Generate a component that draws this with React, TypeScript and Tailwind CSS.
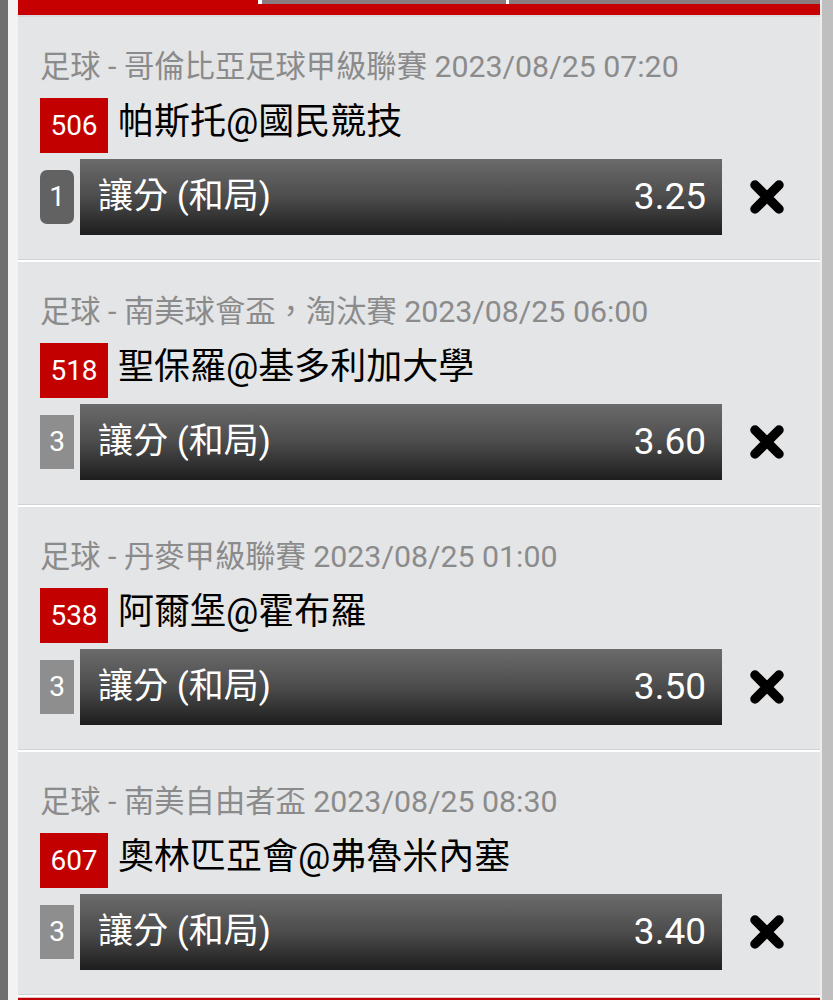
import React from "react";

type Bet = {
  meta: string;
  code: string;
  teams: string;
  num: string;
  first?: boolean;
  odds: string;
};

const bets: Bet[] = [
  { meta: "足球 - 哥倫比亞足球甲級聯賽 2023/08/25 07:20", code: "506", teams: "帕斯托@國民競技", num: "1", first: true, odds: "3.25" },
  { meta: "足球 - 南美球會盃，淘汰賽 2023/08/25 06:00", code: "518", teams: "聖保羅@基多利加大學", num: "3", odds: "3.60" },
  { meta: "足球 - 丹麥甲級聯賽 2023/08/25 01:00", code: "538", teams: "阿爾堡@霍布羅", num: "3", odds: "3.50" },
  { meta: "足球 - 南美自由者盃 2023/08/25 08:30", code: "607", teams: "奧林匹亞會@弗魯米內塞", num: "3", odds: "3.40" },
];

function XIcon() {
  return (
    <svg width="38" height="38" viewBox="0 0 38 38" aria-hidden="true">
      <path d="M7 7 L31 31 M31 7 L7 31" stroke="#000" strokeWidth="9.5" strokeLinecap="round" fill="none" />
    </svg>
  );
}

function Card({ b }: { b: Bet }) {
  return (
    <div className="flex flex-col shrink-0">
      <div className="h-[243px] shrink-0 bg-[#e4e5e7] border-b border-[#d2d3d5] pt-[32px] pl-[22px] flex flex-col">
        <div className="h-[36px] leading-[36px] text-[30.3px] text-[#8b8b8b] whitespace-nowrap">{b.meta}</div>
        <div className="mt-[13px] h-[55px] flex items-center gap-[10px]">
          <div className="w-[68px] h-[55px] bg-[#c30000] text-white text-[28px] flex items-center justify-center">{b.code}</div>
          <div className="text-[36px] text-black leading-none whitespace-nowrap -mt-[7px]">{b.teams}</div>
        </div>
        <div className="mt-[6px] h-[76px] flex items-center">
          <div
            className={
              b.first
                ? "w-[34px] h-[54px] rounded-[7px] bg-[#626262] text-white text-[28px] flex items-center justify-center"
                : "w-[34px] h-[54px] bg-[#8e8e8e] text-white text-[28px] flex items-center justify-center"
            }
          >
            {b.num}
          </div>
          <div className="ml-[6px] w-[642px] h-[76px] bg-[linear-gradient(180deg,#6b6b6b_0%,#4c4c4c_50%,#1d1d1d_100%)] flex items-center justify-between pl-[18px] pr-[16px] text-white text-[35px]">
            <span>讓分 (和局)</span>
            <span className="text-[37px]">{b.odds}</span>
          </div>
          <div className="ml-[26px] flex items-center">
            <XIcon />
          </div>
        </div>
      </div>
      <div className="h-[2px] shrink-0 bg-white" />
    </div>
  );
}

export default function App() {
  return (
    <div
      className="w-[833px] h-[1000px] flex overflow-hidden bg-[#bdbdbd]"
      style={{ fontFamily: "Roboto, 'Noto Sans CJK TC', sans-serif" }}
    >
      <div className="w-[18px] flex shrink-0">
        <div className="w-[8px] bg-[#6f6f6f]" />
        <div className="w-[10px] bg-[#f3f3f3]" />
      </div>
      <div className="w-[804px] shrink-0 flex flex-col border-r-[2px] border-[#ededed] overflow-hidden">
        <div className="h-[4px] shrink-0 flex">
          <div className="w-[240px] bg-[#c60000]" />
          <div className="w-[4px] bg-white" />
          <div className="w-[244px] bg-[#8a7c80]" />
          <div className="w-[3px] bg-white" />
          <div className="flex-1 bg-[#8a7c80]" />
        </div>
        <div className="h-[11px] shrink-0 bg-[#c60000]" />
        <div className="h-[2px] shrink-0 bg-[#d8d9db]" />
        {bets.map((b) => (
          <Card key={b.code} b={b} />
        ))}
        <div className="h-[10px] shrink-0 bg-[#c00000] border-t border-[#e6c0c0]" />
      </div>
      <div className="w-[11px] shrink-0 bg-[#bfbfbf]" />
    </div>
  );
}
